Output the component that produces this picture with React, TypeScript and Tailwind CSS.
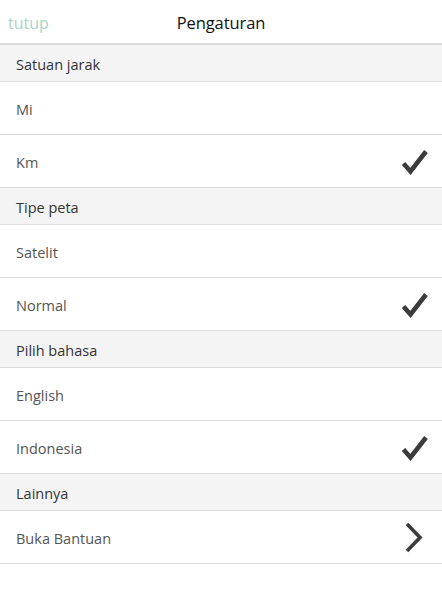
import React from "react";

const Check = () => (
  <svg width="30" height="30" viewBox="0 0 30 30" className="block">
    <path d="M4.5 17.5 L11.5 25.5 L27 5.5" fill="none" stroke="#3b3b3b" strokeWidth="4.6" strokeLinecap="butt" strokeLinejoin="miter" />
  </svg>
);

const Chevron = () => (
  <svg width="24" height="32" viewBox="0 0 24 32" className="block mr-[4px]">
    <path d="M6 3 L19 16.5 L6 30" fill="none" stroke="#3b3b3b" strokeWidth="3.6" strokeLinecap="butt" strokeLinejoin="miter" />
  </svg>
);

type Item = { label: string; checked?: boolean; chevron?: boolean };
const sections: { title: string; items: Item[] }[] = [
  { title: "Satuan jarak", items: [{ label: "Mi" }, { label: "Km", checked: true }] },
  { title: "Tipe peta", items: [{ label: "Satelit" }, { label: "Normal", checked: true }] },
  { title: "Pilih bahasa", items: [{ label: "English" }, { label: "Indonesia", checked: true }] },
  { title: "Lainnya", items: [{ label: "Buka Bantuan", chevron: true }] },
];

export default function App() {
  return (
    <div className="w-[442px] h-[611px] bg-white" style={{ fontFamily: '"Open Sans", "Noto Sans", sans-serif' }}>
      <div className="relative h-[45px] flex items-center justify-center border-b-2 border-[#dadada] pt-[3px]">
        <span className="absolute left-[8px] top-[11px] text-[16px] leading-[24px] text-[#a8d5cb]">tutup</span>
        <span className="text-[16.5px] text-[#111] tracking-[-0.1px]">Pengaturan</span>
      </div>
      {sections.map((s) => (
        <div key={s.title}>
          <div className="h-[37px] bg-[#f4f4f4] border-b border-[#dcdcdc] flex items-center pl-[16px] pt-[3px] text-[14.5px] text-[#333]">
            {s.title}
          </div>
          {s.items.map((it) => (
            <div key={it.label} className="h-[53px] border-b border-[#dcdcdc] flex items-center justify-between pl-[16px] pr-[13px]">
              <span className="text-[14.5px] text-[#555] pt-[3px]">{it.label}</span>
              {it.checked && <Check />}
              {it.chevron && <Chevron />}
            </div>
          ))}
        </div>
      ))}
    </div>
  );
}
